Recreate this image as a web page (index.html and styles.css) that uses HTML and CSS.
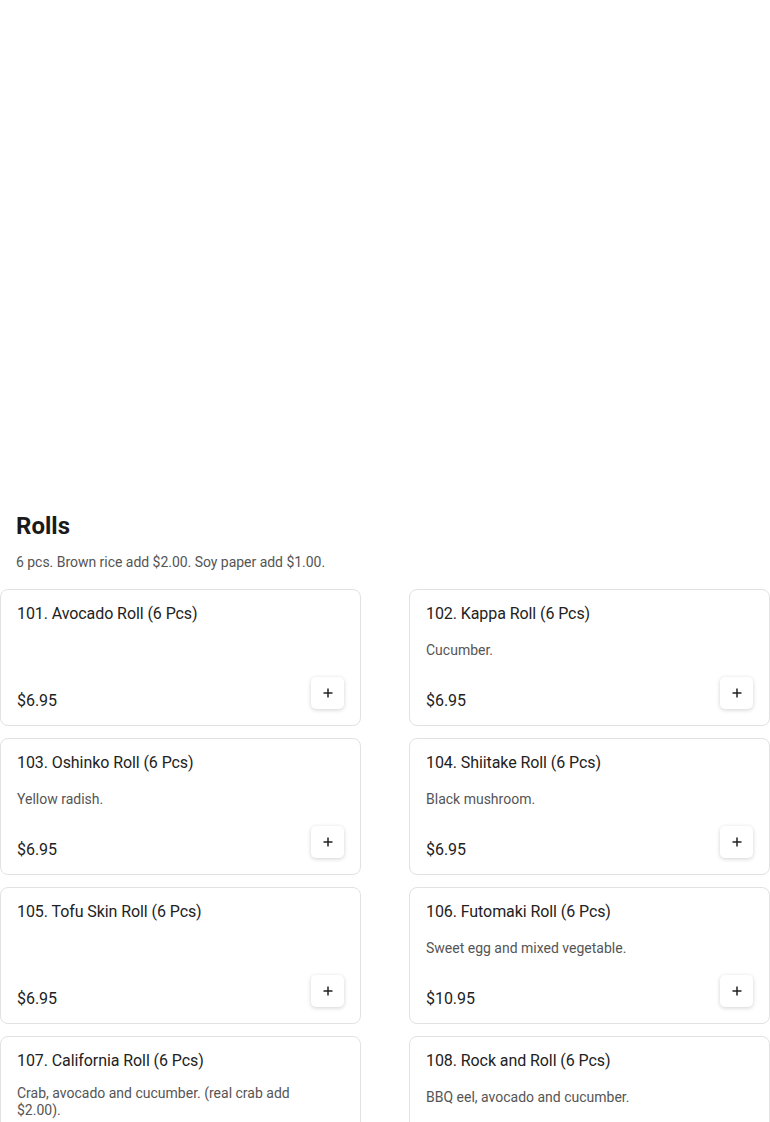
FILE: index.html
```html
<!DOCTYPE html>
<html lang="en">
<head>
<meta charset="utf-8">
<title>Rolls</title>
<link rel="stylesheet" href="styles.css">
</head>
<body>
<div class="hero"></div>
<section class="menu-section">
  <div class="section-head">
    <h2 class="section-title">Rolls</h2>
    <p class="section-desc">6 pcs. Brown rice add $2.00. Soy paper add $1.00.</p>
  </div>
  <div class="grid">
    <div class="card">
      <div class="item-name">101. Avocado Roll (6 Pcs)</div>
      <div class="item-foot"><span class="price">$6.95</span><button class="add"><svg width="10" height="10" viewBox="0 0 10 10"><path d="M5 0.5v9M0.5 5h9" stroke="#222" stroke-width="1.5"/></svg></button></div>
    </div>
    <div class="card">
      <div class="item-name">102. Kappa Roll (6 Pcs)</div>
      <div class="item-desc">Cucumber.</div>
      <div class="item-foot"><span class="price">$6.95</span><button class="add"><svg width="10" height="10" viewBox="0 0 10 10"><path d="M5 0.5v9M0.5 5h9" stroke="#222" stroke-width="1.5"/></svg></button></div>
    </div>
    <div class="card">
      <div class="item-name">103. Oshinko Roll (6 Pcs)</div>
      <div class="item-desc">Yellow radish.</div>
      <div class="item-foot"><span class="price">$6.95</span><button class="add"><svg width="10" height="10" viewBox="0 0 10 10"><path d="M5 0.5v9M0.5 5h9" stroke="#222" stroke-width="1.5"/></svg></button></div>
    </div>
    <div class="card">
      <div class="item-name">104. Shiitake Roll (6 Pcs)</div>
      <div class="item-desc">Black mushroom.</div>
      <div class="item-foot"><span class="price">$6.95</span><button class="add"><svg width="10" height="10" viewBox="0 0 10 10"><path d="M5 0.5v9M0.5 5h9" stroke="#222" stroke-width="1.5"/></svg></button></div>
    </div>
    <div class="card">
      <div class="item-name">105. Tofu Skin Roll (6 Pcs)</div>
      <div class="item-foot"><span class="price">$6.95</span><button class="add"><svg width="10" height="10" viewBox="0 0 10 10"><path d="M5 0.5v9M0.5 5h9" stroke="#222" stroke-width="1.5"/></svg></button></div>
    </div>
    <div class="card">
      <div class="item-name">106. Futomaki Roll (6 Pcs)</div>
      <div class="item-desc">Sweet egg and mixed vegetable.</div>
      <div class="item-foot"><span class="price">$10.95</span><button class="add"><svg width="10" height="10" viewBox="0 0 10 10"><path d="M5 0.5v9M0.5 5h9" stroke="#222" stroke-width="1.5"/></svg></button></div>
    </div>
    <div class="card">
      <div class="item-name">107. California Roll (6 Pcs)</div>
      <div class="item-desc multi">Crab, avocado and cucumber. (real crab add $2.00).</div>
      <div class="item-foot"><span class="price">$8.95</span><button class="add"><svg width="10" height="10" viewBox="0 0 10 10"><path d="M5 0.5v9M0.5 5h9" stroke="#222" stroke-width="1.5"/></svg></button></div>
    </div>
    <div class="card">
      <div class="item-name">108. Rock and Roll (6 Pcs)</div>
      <div class="item-desc">BBQ eel, avocado and cucumber.</div>
      <div class="item-foot"><span class="price">$10.95</span><button class="add"><svg width="10" height="10" viewBox="0 0 10 10"><path d="M5 0.5v9M0.5 5h9" stroke="#222" stroke-width="1.5"/></svg></button></div>
    </div>
  </div>
</section>
</body>
</html>
```
FILE: styles.css
```css
* { box-sizing: border-box; }
html, body {
  margin: 0;
  padding: 0;
  background: #fff;
  font-family: Roboto, "Liberation Sans", Arial, sans-serif;
  color: #1f1f1f;
}
.hero {
  height: 510px;
}
.section-head {
  padding: 0 16px;
}
.section-title {
  margin: 0;
  font-size: 24px;
  line-height: 32px;
  font-weight: 700;
  color: #1a1a1a;
}
.section-desc {
  margin: 10px 0 0;
  font-size: 14px;
  line-height: 20px;
  color: #555;
  letter-spacing: -0.03px;
}
.grid {
  margin-top: 17px;
  display: grid;
  grid-template-columns: 361px 361px;
  column-gap: 48px;
  row-gap: 12px;
}
.card {
  min-height: 137px;
  border: 1px solid #e2e2e2;
  border-radius: 8px;
  padding: 12px 16px 14px;
  display: flex;
  flex-direction: column;
  background: #fff;
}
.item-name {
  font-size: 16px;
  line-height: 24px;
  color: #222;
  letter-spacing: -0.08px;
}
.item-desc {
  margin-top: 16px;
  font-size: 14px;
  line-height: 17px;
  color: #555;
  padding-right: 40px;
}
.item-desc.multi {
  margin-top: 12px;
}
.item-foot {
  margin-top: auto;
  padding-top: 16px;
  display: flex;
  justify-content: space-between;
  align-items: flex-end;
}
.price {
  font-size: 16px;
  line-height: 20px;
  color: #222;
  letter-spacing: -0.05px;
}
.add {
  width: 33px;
  height: 32px;
  margin-bottom: 2px;
  border: none;
  border-radius: 5px;
  background: #fff;
  box-shadow: 0 1px 4px rgba(0,0,0,0.18);
  display: flex;
  align-items: center;
  justify-content: center;
  padding: 0;
  cursor: pointer;
}
```
